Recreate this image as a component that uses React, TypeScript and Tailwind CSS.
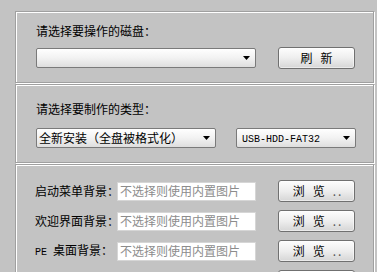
const cjk = "font-['SimSun','Noto_Sans_CJK_SC',sans-serif]";

function Arrow() {
  return (
    <svg width="7" height="4" viewBox="0 0 7 4" className="shrink-0">
      <path d="M0 0h7L3.5 4z" fill="#000" />
    </svg>
  );
}

function Select({ width, children }: { width: string; children?: React.ReactNode }) {
  return (
    <div
      className={`${width} h-[20px] flex items-center justify-between pl-[2px] pr-[5px] rounded-[2px] border border-[#7a7a7a] bg-gradient-to-b from-[#ffffff] via-[#f2f2f2] to-[#dedede] text-[12px] leading-[12px] text-black whitespace-nowrap`}
    >
      <span>{children}</span>
      <Arrow />
    </div>
  );
}

function Button({ children }: { children?: React.ReactNode }) {
  return (
    <div className="w-[77px] h-[22px] flex items-center justify-center gap-[8px] rounded-[3px] border border-[#707070] bg-gradient-to-b from-[#fdfdfd] via-[#eeeeee] to-[#d6d6d6] text-[12px] leading-[12px] text-black shadow-[inset_0_0_0_1px_#ffffff80]">
      {children}
    </div>
  );
}

function Panel({ className, children }: { className: string; children: React.ReactNode }) {
  return (
    <div
      className={`w-[359px] border border-[#a0a0a0] shadow-[inset_1px_1px_0_#ffffff,1px_1px_0_#ffffff] ${className}`}
    >
      {children}
    </div>
  );
}

function Browse() {
  return (
    <Button>
      <span className="ml-[3px]">浏</span>
      <span>览</span>
      <span className="text-[#555] tracking-[2px]">..</span>
    </Button>
  );
}

function PicRow({ label, mono }: { label: string; mono?: string }) {
  return (
    <div className="flex items-center h-[22px]">
      <div className="w-[82px] text-[12px] leading-[12px] text-black whitespace-nowrap">
        {mono && <span className="font-['Liberation_Mono',monospace] text-[10px] mr-[6px]">{mono}</span>}
        {label}
      </div>
      <div className="w-[139px] h-[19px] flex items-center pl-[2px] bg-white border border-[#d6d6d6] text-[12px] leading-[12px] text-[#8c8c8c] whitespace-nowrap overflow-hidden">
        不选择则使用内置图片
      </div>
      <div className="ml-[22px]">
        <Browse />
      </div>
    </div>
  );
}

export default function App() {
  return (
    <div className={`w-[377px] h-[272px] overflow-hidden bg-[#c3c3c3] ${cjk}`}>
      <div className="flex flex-col gap-[1px] pt-[11px] pl-[15px]">
        <Panel className="h-[72px] pt-[13px] pl-[19px]">
          <div className="text-[12px] leading-[12px] text-black pl-[1px]">请选择要操作的磁盘：</div>
          <div className="flex items-center mt-[10px] pl-[1px]">
            <Select width="w-[220px]" />
            <div className="ml-[22px]">
              <Button>
                <span>刷</span>
                <span>新</span>
              </Button>
            </div>
          </div>
        </Panel>

        <Panel className="h-[79px] pt-[18px] pl-[19px]">
          <div className="text-[12px] leading-[12px] text-black pl-[1px]">请选择要制作的类型：</div>
          <div className="flex items-center gap-[20px] mt-[13px] pl-[1px]">
            <Select width="w-[180px]">全新安装（全盘被格式化）</Select>
            <Select width="w-[120px]">
              <span className="font-['Liberation_Mono',monospace] text-[10px] pl-[3px]">USB-HDD-FAT32</span>
            </Select>
          </div>
        </Panel>

        <Panel className="h-[140px] pt-[15px] pl-[19px]">
          <div className="flex flex-col gap-[8px]">
            <PicRow label="启动菜单背景：" />
            <PicRow label="欢迎界面背景：" />
            <PicRow mono="PE" label="桌面背景：" />
            <div className="flex items-center h-[22px] pl-[243px]">
              <Button />
            </div>
          </div>
        </Panel>
      </div>
    </div>
  );
}
